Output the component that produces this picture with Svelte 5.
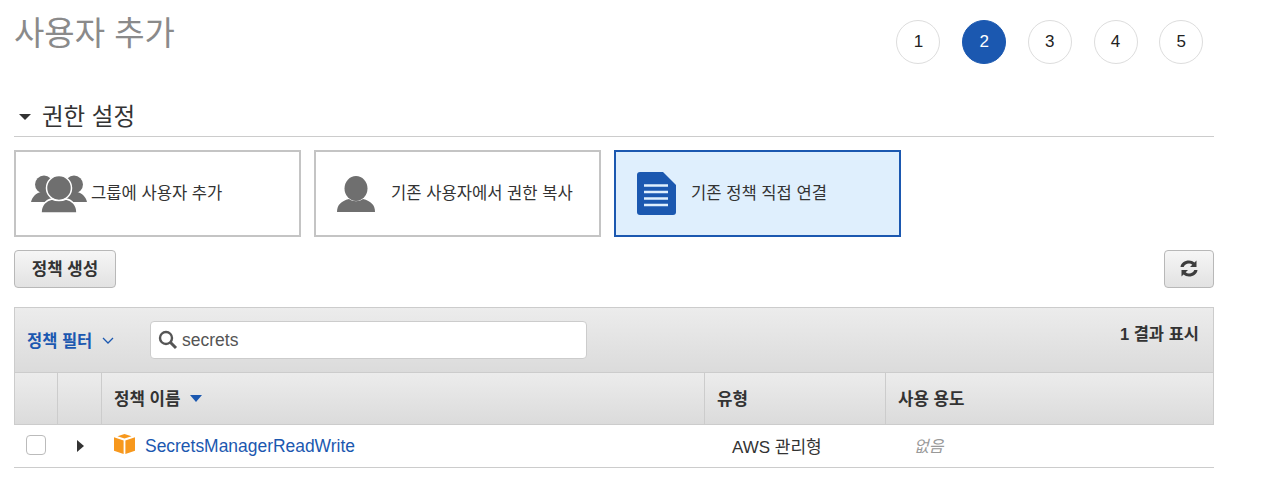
<script>
  const steps = [1, 2, 3, 4, 5];
  const active = 2;
</script>

<div class="page">
  <header class="top">
    <h1>사용자 추가</h1>
    <ol class="steps">
      {#each steps as s}
        <li class:active={s === active}>{s}</li>
      {/each}
    </ol>
  </header>

  <h2 class="section"><span class="caret"></span>권한 설정</h2>

  <div class="cards">
    <div class="card">
      <svg class="ico-group" width="56" height="38" viewBox="0 0 56 38">
        <circle cx="13" cy="9.500" r="9" fill="#6f6f6f" />
        <circle cx="43" cy="9.500" r="9" fill="#6f6f6f" />
        <path d="M0 27c1-5 5-9 10-10h36c5 1 9 5 10 10z" fill="#6f6f6f" />
        <circle cx="28" cy="13" r="12.500" fill="#6f6f6f" stroke="#fff" stroke-width="1.500" />
        <path d="M10 38c0-8 5-13 11-14 4 2 10 2 14 0 6 1 11 6 11 14z" fill="#6f6f6f" stroke="#fff" stroke-width="1.500" />
      </svg>
      <span>그룹에 사용자 추가</span>
    </div>
    <div class="card">
      <svg class="ico-user" width="38" height="36" viewBox="0 0 38 36">
        <ellipse cx="19" cy="12.500" rx="11.500" ry="12.500" fill="#6f6f6f" />
        <path d="M0 36c0-7 4-11 12-13 4 3 10 3 14 0 8 2 12 6 12 13z" fill="#6f6f6f" />
      </svg>
      <span>기존 사용자에서 권한 복사</span>
    </div>
    <div class="card selected">
      <svg class="ico-doc" width="39" height="43" viewBox="0 0 39 43">
        <path d="M3 0h23l13 13v27a3 3 0 0 1-3 3H3a3 3 0 0 1-3-3V3a3 3 0 0 1 3-3z" fill="#1b58b0" />
        <path d="M7 13.500h24M7 20h24M7 26.500h24M7 33h24" stroke="#dfeffd" stroke-width="2.600" />
      </svg>
      <span>기존 정책 직접 연결</span>
    </div>
  </div>

  <div class="actions">
    <button class="btn">정책 생성</button>
    <button class="btn refresh" aria-label="새로 고침">
      <svg width="18" height="17" viewBox="0 0 18 17">
        <path d="M0.500 7C1 3 4.500 0.500 9 0.500c2.200 0 4 .8 5.500 2L16.500 .5V7H10l2.300-2.300C11.400 3.900 10.300 3.500 9 3.500 6.500 3.500 4.500 4.800 3.700 7z" fill="#3d3d3d" />
        <path d="M17.500 10C17 14 13.500 16.500 9 16.500c-2.200 0-4-.8-5.500-2L1.500 16.500V10H8l-2.300 2.300c.9.800 2 1.200 3.300 1.200 2.500 0 4.500-1.300 5.300-3.500z" fill="#3d3d3d" />
      </svg>
    </button>
  </div>

  <section class="table">
    <div class="filter">
      <span class="filter-label">정책 필터
        <svg width="12" height="7" viewBox="0 0 12 7"><path d="M1 1l5 5 5-5" fill="none" stroke="#1b58b0" stroke-width="1.300" /></svg>
      </span>
      <div class="search">
        <svg width="20" height="20" viewBox="0 0 20 20">
          <circle cx="8" cy="8" r="6" fill="none" stroke="#555" stroke-width="2.400" />
          <path d="M12.500 12.500l5.500 5.500" stroke="#555" stroke-width="3" />
        </svg>
        <span>secrets</span>
      </div>
      <span class="count">1 결과 표시</span>
    </div>

    <div class="row head">
      <div class="cell"></div>
      <div class="cell"></div>
      <div class="cell name">정책 이름 <span class="sort"></span></div>
      <div class="cell type">유형</div>
      <div class="cell use">사용 용도</div>
    </div>

    <div class="row body">
      <div class="cell"><span class="check"></span></div>
      <div class="cell"><span class="expand"></span></div>
      <div class="cell name">
        <svg width="21" height="20" viewBox="0 0 21 20">
          <path d="M10.500 0l7 2.200-7 2.300-7-2.300z" fill="#f7981d" />
          <path d="M0 3.200l9.600 3.300V20L0 16.800z" fill="#f7981d" />
          <path d="M21 3.200l-9.600 3.300V20L21 16.800z" fill="#f7981d" />
        </svg>
        <a href="#top">SecretsManagerReadWrite</a>
      </div>
      <div class="cell type">AWS 관리형</div>
      <div class="cell use"><em>없음</em></div>
    </div>
  </section>
</div>

<style>
  :global(body) {
    background: #fff;
    font-family: "Liberation Sans", "Noto Sans CJK KR", sans-serif;
  }
  .page {
    width: 1200px;
    height: 492px;
    padding-left: 14px;
    color: #333;
    overflow: hidden;
  }
  .top {
    display: flex;
    justify-content: space-between;
    height: 97px;
  }
  h1 {
    margin: 14px 0 0;
    font-size: 33px;
    line-height: 40px;
    font-weight: 400;
    color: #8a8a8a;
  }
  .steps {
    display: flex;
    gap: 21.700px;
    list-style: none;
    margin: 19.500px 10.800px 0 0;
    padding: 0;
  }
  .steps li {
    box-sizing: border-box;
    width: 44px;
    height: 44px;
    border: 1px solid #ddd;
    border-radius: 50%;
    display: flex;
    align-items: center;
    justify-content: center;
    font-size: 17px;
    color: #222;
  }
  .steps li.active {
    background: #1b58b0;
    border-color: #1b58b0;
    color: #fff;
  }
  .section {
    display: flex;
    align-items: center;
    margin: 0;
    height: 40px;
    padding-bottom: 4px;
    box-sizing: border-box;
    border-bottom: 1px solid #ccc;
    font-size: 23.500px;
    font-weight: 400;
    color: #333;
  }
  .caret {
    width: 0;
    height: 0;
    margin: 4px 11px 0 5px;
    border-left: 6px solid transparent;
    border-right: 6px solid transparent;
    border-top: 6px solid #333;
  }
  .cards {
    display: flex;
    gap: 13px;
    margin-top: 13px;
  }
  .card {
    box-sizing: border-box;
    width: 287px;
    height: 87px;
    border: 2px solid #c4c4c4;
    display: flex;
    align-items: center;
    font-size: 16.600px;
    color: #333;
  }
  .card.selected {
    background: #dfeffd;
    border-color: #1b58b0;
  }
  .card span { margin-bottom: 3px; }
  .ico-group { margin-left: 15px; margin-top: 1px; }
  .ico-group + span { margin-left: 4px; }
  .ico-user { margin-left: 21px; }
  .ico-user + span { margin-left: 16px; }
  .ico-doc { margin-left: 21px; }
  .ico-doc + span { margin-left: 15px; }
  .actions {
    display: flex;
    justify-content: space-between;
    margin-top: 13px;
  }
  .btn {
    box-sizing: border-box;
    height: 38px;
    width: 102px;
    padding: 0 0 3px;
    border: 1px solid #b8b8b8;
    border-radius: 4px;
    background: linear-gradient(#f6f6f6, #e2e2e2);
    font-family: inherit;
    font-size: 16.800px;
    font-weight: 700;
    color: #333;
  }
  .refresh {
    width: 50px;
    display: flex;
    align-items: center;
    justify-content: center;
    padding: 0 0 2px;
  }
  .table {
    margin-top: 19px;
    border-bottom: 1px solid #ccc;
  }
  .filter {
    box-sizing: border-box;
    height: 65px;
    display: flex;
    border: 1px solid #ccc;
    border-bottom: 0;
    background: linear-gradient(#ececec, #dbdbdb);
  }
  .filter-label {
    display: flex;
    align-items: center;
    gap: 10px;
    height: 64px;
    margin-left: 12px;
    width: 123px;
    font-size: 16.500px;
    font-weight: 700;
    color: #1b58b0;
  }
  .search {
    box-sizing: border-box;
    width: 437px;
    height: 38px;
    margin-top: 13px;
    border: 1px solid #ccc;
    border-radius: 4px;
    background: #fff;
    display: flex;
    align-items: center;
    gap: 4px;
    padding-left: 7px;
    font-size: 17.500px;
    color: #555;
  }
  .count {
    margin: 13px 14px 0 auto;
    font-size: 16.500px;
    font-weight: 700;
    color: #333;
  }
  .row {
    display: grid;
    grid-template-columns: 43px 44px 603px 181px 329px;
  }
  .head {
    box-sizing: border-box;
    height: 53px;
    border: 1px solid #ccc;
    background: linear-gradient(#ececec, #dbdbdb);
    font-size: 16.800px;
    font-weight: 700;
    color: #333;
  }
  .head .cell {
    display: flex;
    align-items: center;
    border-right: 1px solid #ccc;
    padding-left: 12px;
    padding-bottom: 2px;
  }
  .head .cell:last-child { border-right: 0; }
  .sort {
    width: 0;
    height: 0;
    margin: 2px 0 0 10px;
    border-left: 6.500px solid transparent;
    border-right: 6.500px solid transparent;
    border-top: 7px solid #1b58b0;
  }
  .body {
    height: 42px;
    font-size: 17px;
  }
  .body .cell {
    display: flex;
    align-items: center;
    padding-bottom: 2px;
  }
  .check {
    box-sizing: border-box;
    width: 20px;
    height: 20px;
    margin-left: 12px;
    border: 1px solid #bbb;
    border-radius: 4px;
  }
  .expand {
    width: 0;
    height: 0;
    margin-left: 20px;
    border-top: 6px solid transparent;
    border-bottom: 6px solid transparent;
    border-left: 7px solid #333;
    margin-top: 2px;
  }
  .body .name { padding-left: 13px; gap: 10px; }
  .body .name svg { margin-top: -2px; }
  .body .name a {
    color: #1b58b0;
    text-decoration: none;
    font-size: 17.450px;
    margin-top: 2px;
  }
  .body .type { padding-left: 28px; }
  .body .use { padding-left: 29px; }
  em { color: #999; font-size: 16px; }
</style>
